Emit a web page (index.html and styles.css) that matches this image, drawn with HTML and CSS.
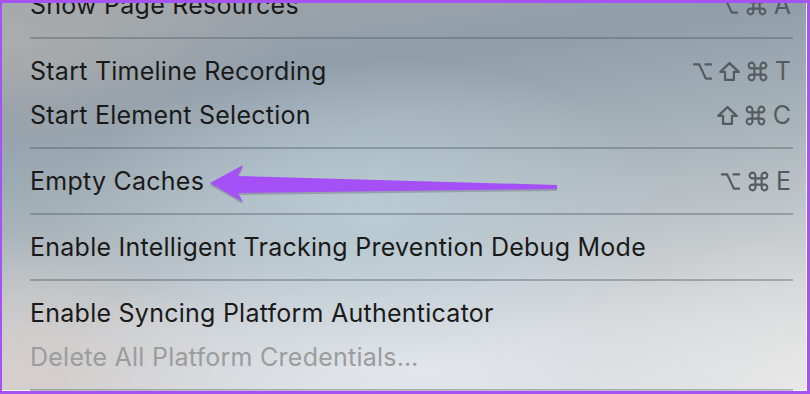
FILE: index.html
```html
<!DOCTYPE html>
<html lang="en">
<head>
<meta charset="utf-8">
<title>Develop menu</title>
<link rel="stylesheet" href="styles.css">
</head>
<body>
<svg class="defs" width="0" height="0" aria-hidden="true">
  <defs>
    <symbol id="opt" viewBox="0 0 20 18"><path d="M1 2.2 H6.8 L13.2 15.8 H19 M12 2.2 H19"/></symbol>
    <symbol id="shift" viewBox="0 0 20 18"><path d="M10 1 L18.8 9.4 H14.2 V17 H5.8 V9.4 H1.2 Z"/></symbol>
    <symbol id="cmd" viewBox="0 0 20 20"><path d="M7.3 7.3 V5 A2.5 2.5 0 1 0 5 7.3 H15 A2.5 2.5 0 1 0 12.7 5 V15 A2.5 2.5 0 1 0 15 12.7 H5 A2.5 2.5 0 1 0 7.3 15 Z"/></symbol>
  </defs>
</svg>
<div class="frame">
  <div class="menu">
    <ul class="list">
      <li class="item"><span class="label">Show Page Resources</span><span class="keys"><svg class="k"><use href="#opt"/></svg><svg class="k cmd"><use href="#cmd"/></svg><span class="kl">A</span></span></li>
      <li class="sep"></li>
      <li class="item"><span class="label">Start Timeline Recording</span><span class="keys"><svg class="k"><use href="#opt"/></svg><svg class="k"><use href="#shift"/></svg><svg class="k cmd"><use href="#cmd"/></svg><span class="kl">T</span></span></li>
      <li class="item"><span class="label">Start Element Selection</span><span class="keys"><svg class="k"><use href="#shift"/></svg><svg class="k cmd"><use href="#cmd"/></svg><span class="kl">C</span></span></li>
      <li class="sep"></li>
      <li class="item"><span class="label">Empty Caches</span><span class="keys"><svg class="k"><use href="#opt"/></svg><svg class="k cmd"><use href="#cmd"/></svg><span class="kl">E</span></span></li>
      <li class="sep"></li>
      <li class="item"><span class="label">Enable Intelligent Tracking Prevention Debug Mode</span></li>
      <li class="sep"></li>
      <li class="item"><span class="label">Enable Syncing Platform Authenticator</span></li>
      <li class="item disabled"><span class="label">Delete All Platform Credentials…</span></li>
      <li class="sep"></li>
    </ul>
    <svg class="arrow" width="360" height="50" viewBox="200 160 360 50" aria-hidden="true">
      <polygon class="arrow-shadow" points="210,185 243,167 238,178 557,187 557,191 238,195 243,204"/>
      <polygon class="arrow-body" points="210,183 243,165 238,176 557,185 557,189 238,193 243,202"/>
    </svg>
  </div>
</div>
</body>
</html>
```
FILE: styles.css
```css
html, body {
  margin: 0;
  padding: 0;
}
body {
  width: 810px;
  height: 394px;
  overflow: hidden;
  font-family: "Inter", "Noto Sans", sans-serif;
}
.defs {
  position: absolute;
  width: 0;
  height: 0;
}
.frame {
  box-sizing: border-box;
  width: 810px;
  height: 394px;
  border: 3px solid #a653f4;
  border-left-width: 2px;
  overflow: hidden;
}
.menu {
  position: relative;
  height: 100%;
  overflow: hidden;
  box-shadow: inset -1px -1px 0 rgba(255,255,255,0.9);
  background:
    radial-gradient(ellipse 38% 40% at 46% 54%, rgba(186,205,214,0.9), rgba(186,205,214,0) 100%),
    radial-gradient(ellipse 45% 35% at 52% 95%, rgba(226,230,236,1), rgba(226,230,236,0) 100%),
    radial-gradient(ellipse 30% 40% at 100% 100%, rgba(232,232,232,1), rgba(232,232,232,0) 100%),
    radial-gradient(ellipse 30% 40% at 0% 100%, rgba(214,206,204,1), rgba(214,206,204,0) 100%),
    radial-gradient(ellipse 35% 30% at 0% 10%, rgba(170,172,173,1), rgba(170,172,173,0) 100%),
    linear-gradient(172deg, #a1a6a9 0%, #909eaa 22%, #a7b3b9 45%, #c9cdd0 70%, #dcdcdc 100%);
}
.list {
  list-style: none;
  margin: -20px 0 0 0;
  padding: 0 14px 0 28px;
}
.item {
  height: 44px;
  display: flex;
  align-items: center;
  justify-content: space-between;
  font-size: 25px;
  color: #1a1a1a;
  letter-spacing: 0.25px;
  white-space: nowrap;
}
.item.disabled {
  color: #9b9c9e;
}
.sep {
  height: 22px;
  display: flex;
  align-items: center;
}
.sep::before {
  content: "";
  display: block;
  width: 100%;
  height: 2px;
  background: rgba(80, 88, 96, 0.38);
}
.keys {
  display: flex;
  align-items: center;
  gap: 6px;
  color: #565b5f;
  padding-right: 2px;
}
.k {
  width: 21px;
  height: 19px;
  fill: none;
  stroke: currentColor;
  stroke-width: 2.1;
  stroke-linejoin: round;
  stroke-linecap: butt;
}
.k.cmd {
  width: 23px;
  height: 23px;
  stroke-width: 1.8;
}
.kl {
  font-size: 25px;
  letter-spacing: 0;
  line-height: 1;
}
.arrow {
  position: absolute;
  left: 198px;
  top: 157px;
  overflow: visible;
}
.arrow-shadow {
  fill: rgba(60, 40, 80, 0.25);
}
.arrow-body {
  fill: #a54ff6;
}
```
